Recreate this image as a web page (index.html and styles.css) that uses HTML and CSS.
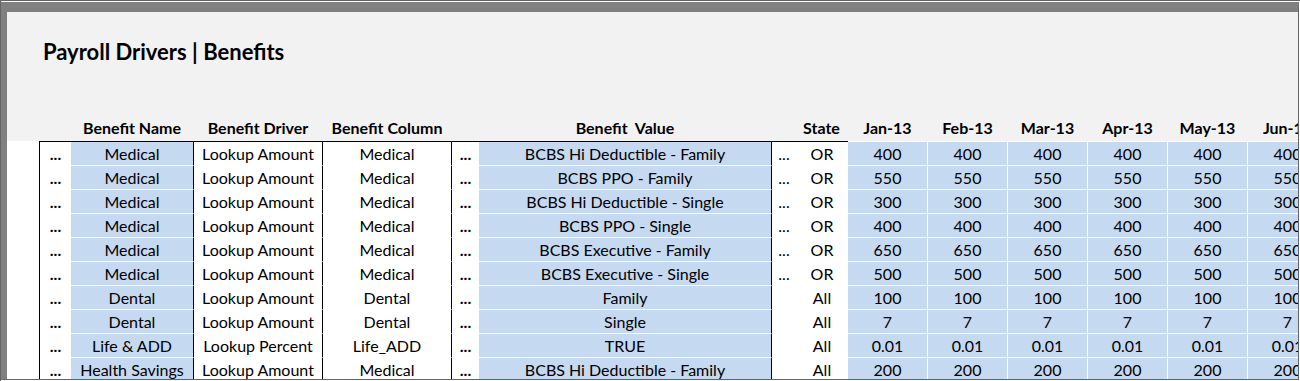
FILE: index.html
```html
<!DOCTYPE html>
<html>
<head>
<meta charset="utf-8">
<link rel="stylesheet" href="styles.css">
</head>
<body>
<div class="screen">
  <div class="win">
    <div class="head">
      <h1 class="title">Payroll Drivers | Benefits</h1>
      <div class="hrow">
        <div class="spacer"></div>
        <div></div>
        <div>Benefit Name</div>
        <div>Benefit Driver</div>
        <div>Benefit Column</div>
        <div></div>
        <div>Benefit&nbsp; Value</div>
        <div></div>
        <div>State</div>
        <div>Jan-13</div>
        <div>Feb-13</div>
        <div>Mar-13</div>
        <div>Apr-13</div>
        <div>May-13</div>
        <div>Jun-13</div>
      </div>
    </div>
    <div class="body">
      <div class="gap"></div>
      <div class="fixed">
        <div class="dots">...</div><div class="blue vl">Medical</div><div class="vl">Lookup Amount</div><div class="vl">Medical</div><div class="dots">...</div><div class="blue vl">BCBS Hi Deductible - Family</div><div class="sdots">...</div><div>OR</div>
        <div class="dots">...</div><div class="blue vl">Medical</div><div class="vl">Lookup Amount</div><div class="vl">Medical</div><div class="dots">...</div><div class="blue vl">BCBS PPO - Family</div><div class="sdots">...</div><div>OR</div>
        <div class="dots">...</div><div class="blue vl">Medical</div><div class="vl">Lookup Amount</div><div class="vl">Medical</div><div class="dots">...</div><div class="blue vl">BCBS Hi Deductible - Single</div><div class="sdots">...</div><div>OR</div>
        <div class="dots">...</div><div class="blue vl">Medical</div><div class="vl">Lookup Amount</div><div class="vl">Medical</div><div class="dots">...</div><div class="blue vl">BCBS PPO - Single</div><div class="sdots">...</div><div>OR</div>
        <div class="dots">...</div><div class="blue vl">Medical</div><div class="vl">Lookup Amount</div><div class="vl">Medical</div><div class="dots">...</div><div class="blue vl">BCBS Executive - Family</div><div class="sdots">...</div><div>OR</div>
        <div class="dots">...</div><div class="blue vl">Medical</div><div class="vl">Lookup Amount</div><div class="vl">Medical</div><div class="dots">...</div><div class="blue vl">BCBS Executive - Single</div><div class="sdots">...</div><div>OR</div>
        <div class="dots">...</div><div class="blue vl">Dental</div><div class="vl">Lookup Amount</div><div class="vl">Dental</div><div class="dots">...</div><div class="blue vl">Family</div><div class="sdots"></div><div>All</div>
        <div class="dots">...</div><div class="blue vl">Dental</div><div class="vl">Lookup Amount</div><div class="vl">Dental</div><div class="dots">...</div><div class="blue vl">Single</div><div class="sdots"></div><div>All</div>
        <div class="dots">...</div><div class="blue vl">Life &amp; ADD</div><div class="vl">Lookup Percent</div><div class="vl">Life_ADD</div><div class="dots">...</div><div class="blue vl">TRUE</div><div class="sdots"></div><div>All</div>
        <div class="dots">...</div><div class="blue vl">Health Savings</div><div class="vl">Lookup Amount</div><div class="vl">Medical</div><div class="dots">...</div><div class="blue vl">BCBS Hi Deductible - Family</div><div class="sdots"></div><div>All</div>
      </div>
      <div class="months">
        <div>400</div><div>400</div><div>400</div><div>400</div><div>400</div><div>400</div>
        <div>550</div><div>550</div><div>550</div><div>550</div><div>550</div><div>550</div>
        <div>300</div><div>300</div><div>300</div><div>300</div><div>300</div><div>300</div>
        <div>400</div><div>400</div><div>400</div><div>400</div><div>400</div><div>400</div>
        <div>650</div><div>650</div><div>650</div><div>650</div><div>650</div><div>650</div>
        <div>500</div><div>500</div><div>500</div><div>500</div><div>500</div><div>500</div>
        <div>100</div><div>100</div><div>100</div><div>100</div><div>100</div><div>100</div>
        <div>7</div><div>7</div><div>7</div><div>7</div><div>7</div><div>7</div>
        <div>0.01</div><div>0.01</div><div>0.01</div><div>0.01</div><div>0.01</div><div>0.01</div>
        <div>200</div><div>200</div><div>200</div><div>200</div><div>200</div><div>200</div>
      </div>
    </div>
  </div>
</div>
</body>
</html>
```

FILE: styles.css
```css
html, body {
  margin: 0;
  padding: 0;
  background: #ffffff;
}

.screen {
  box-sizing: border-box;
  width: 1300px;
  height: 381px;
  border-top: 1px solid #646464;
  border-left: 1px solid #646464;
  padding-top: 1px;
  background: #ffffff;
  overflow: hidden;
  font-family: Lato, "Open Sans", sans-serif;
  color: #000000;
}

.win {
  box-sizing: border-box;
  width: 1298px;
  height: 378px;
  border-top: 10px solid #808080;
  border-left: 6px solid #808080;
  border-right: 1px solid #646464;
  border-bottom: 1px solid #646464;
  background: #ffffff;
  overflow: hidden;
}

.head {
  height: 129px;
  background: #f2f2f2;
  display: flex;
  flex-direction: column;
}

.title {
  margin: 0;
  padding: 27px 0 0 36px;
  font-size: 22px;
  line-height: 1.2;
  font-weight: 700;
}

.hrow {
  margin-top: auto;
  padding-bottom: 1px;
  display: grid;
  grid-template-columns: 33px 31px 123px 129px 129px 27px 293px 24px 52px repeat(6, 80px);
  height: 24px;
  line-height: 24px;
  font-size: 16px;
  font-weight: 700;
  text-align: center;
  white-space: nowrap;
}

.hrow > div {
  padding-right: 1px;
}

.hrow > .spacer {
  padding: 0;
}

.body {
  display: flex;
  align-items: flex-start;
  font-size: 16px;
  white-space: nowrap;
}

.gap {
  flex: 0 0 32px;
}

.fixed {
  flex: 0 0 auto;
  display: grid;
  grid-template-columns: 31px 123px 129px 129px 27px 293px 24px 52px;
  grid-auto-rows: 24px;
  border-top: 1px solid #000000;
  border-left: 1px solid #000000;
}

.months {
  flex: 0 0 auto;
  margin-top: 1px;
  display: grid;
  grid-template-columns: repeat(6, 80px);
  grid-auto-rows: 24px;
}

.fixed > div,
.months > div {
  box-sizing: border-box;
  height: 24px;
  line-height: 23px;
  border-bottom: 1px solid #ffffff;
  text-align: center;
  overflow: hidden;
}

.months > div {
  background: #c5d9f1;
  border-right: 1px solid #ffffff;
}

.blue {
  background: #c5d9f1;
}

.vl {
  border-right: 1px solid #000000;
}

.dots {
  font-weight: 700;
}

.sdots {
  font-weight: 400;
}
```
